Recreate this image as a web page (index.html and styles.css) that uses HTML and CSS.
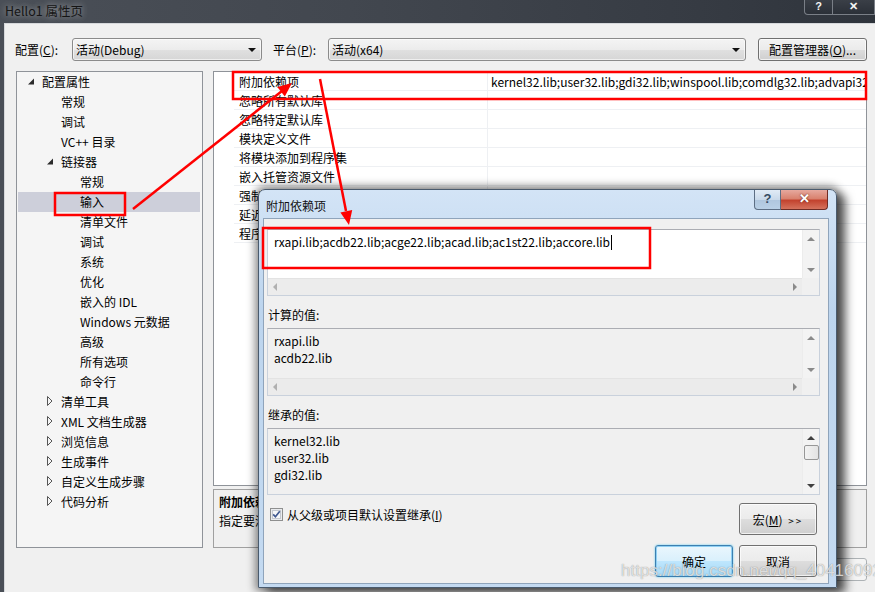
FILE: index.html
```html
<!DOCTYPE html>
<html lang="zh-CN">
<head>
    <meta charset="UTF-8">
    <title>Hello1 属性页</title>
    <link rel="stylesheet" href="styles.css">
</head>
<body>
    <div class="window">
        <div class="titlebar">
            <span class="title">Hello1 属性页</span>
            <div class="caption">
                <span class="cap-btn cap-help">?</span>
                <span class="cap-btn cap-close">✕</span>
            </div>
        </div>

        <div class="client">
            <!-- Configuration selectors -->
            <div class="config-row">
                <span class="lbl lbl-config">配置(<u>C</u>):</span>
                <div class="combo combo-config"><span>活动(Debug)</span><i class="drop"></i></div>
                <span class="lbl lbl-platform">平台(<u>P</u>):</span>
                <div class="combo combo-platform"><span>活动(x64)</span><i class="drop"></i></div>
                <button class="btn btn-manager">配置管理器(<u>O</u>)...</button>
            </div>

            <div class="main-row">
                <!-- Property tree -->
                <div class="tree">
                    <div class="node lv1"><svg class="tri" width="14" height="9" viewBox="0 0 14 9"><path d="M6 1.5V7.5H0z" fill="#2b2b2b"/></svg>配置属性</div>
                    <div class="node lv2">常规</div>
                    <div class="node lv2">调试</div>
                    <div class="node lv2">VC++ 目录</div>
                    <div class="node lv2 has-tri"><svg class="tri" width="14" height="9" viewBox="0 0 14 9"><path d="M6 1.5V7.5H0z" fill="#2b2b2b"/></svg>链接器</div>
                    <div class="node lv3">常规</div>
                    <div class="node lv3 selected">输入</div>
                    <div class="node lv3">清单文件</div>
                    <div class="node lv3">调试</div>
                    <div class="node lv3">系统</div>
                    <div class="node lv3">优化</div>
                    <div class="node lv3">嵌入的 IDL</div>
                    <div class="node lv3">Windows 元数据</div>
                    <div class="node lv3">高级</div>
                    <div class="node lv3">所有选项</div>
                    <div class="node lv3">命令行</div>
                    <div class="node lv2 has-tri"><svg class="tri" width="14" height="10" viewBox="0 0 14 10"><path d="M0.5 0.5L5 5L0.5 9.5z" fill="none" stroke="#555"/></svg>清单工具</div>
                    <div class="node lv2 has-tri"><svg class="tri" width="14" height="10" viewBox="0 0 14 10"><path d="M0.5 0.5L5 5L0.5 9.5z" fill="none" stroke="#555"/></svg>XML 文档生成器</div>
                    <div class="node lv2 has-tri"><svg class="tri" width="14" height="10" viewBox="0 0 14 10"><path d="M0.5 0.5L5 5L0.5 9.5z" fill="none" stroke="#555"/></svg>浏览信息</div>
                    <div class="node lv2 has-tri"><svg class="tri" width="14" height="10" viewBox="0 0 14 10"><path d="M0.5 0.5L5 5L0.5 9.5z" fill="none" stroke="#555"/></svg>生成事件</div>
                    <div class="node lv2 has-tri"><svg class="tri" width="14" height="10" viewBox="0 0 14 10"><path d="M0.5 0.5L5 5L0.5 9.5z" fill="none" stroke="#555"/></svg>自定义生成步骤</div>
                    <div class="node lv2 has-tri"><svg class="tri" width="14" height="10" viewBox="0 0 14 10"><path d="M0.5 0.5L5 5L0.5 9.5z" fill="none" stroke="#555"/></svg>代码分析</div>
                </div>

                <!-- Property grid + description -->
                <div class="right-col">
                    <div class="grid">
                        <div class="row"><div class="gutter"></div><div class="name">附加依赖项</div><div class="value">kernel32.lib;user32.lib;gdi32.lib;winspool.lib;comdlg32.lib;advapi32.lib;shell32.lib;ole32.lib</div></div>
                        <div class="row"><div class="gutter"></div><div class="name">忽略所有默认库</div><div class="value"></div></div>
                        <div class="row"><div class="gutter"></div><div class="name">忽略特定默认库</div><div class="value"></div></div>
                        <div class="row"><div class="gutter"></div><div class="name">模块定义文件</div><div class="value"></div></div>
                        <div class="row"><div class="gutter"></div><div class="name">将模块添加到程序集</div><div class="value"></div></div>
                        <div class="row"><div class="gutter"></div><div class="name">嵌入托管资源文件</div><div class="value"></div></div>
                        <div class="row"><div class="gutter"></div><div class="name">强制符号引用</div><div class="value"></div></div>
                        <div class="row"><div class="gutter"></div><div class="name">延迟加载的 DLL</div><div class="value"></div></div>
                        <div class="row"><div class="gutter"></div><div class="name">程序集链接资源</div><div class="value"></div></div>
                    </div>
                    <div class="desc">
                        <b>附加依赖项</b>
                        <p>指定要添加到链接命令行的附加项。[例如 kernel32.lib]</p>
                    </div>
                </div>
            </div>

            <div class="footer">
                <button class="btn">确定</button>
                <button class="btn">取消</button>
                <button class="btn btn-disabled"></button>
            </div>
        </div>
    </div>

    <!-- Additional dependencies dialog -->
    <div class="dialog">
        <div class="dlg-title">
            <span>附加依赖项</span>
            <div class="dlg-caption">
                <span class="dcap dcap-help">?</span>
                <span class="dcap dcap-close">✕</span>
            </div>
        </div>
        <div class="dlg-client">
            <div class="edit edit-main">
                <div class="edit-text">rxapi.lib;acdb22.lib;acge22.lib;acad.lib;ac1st22.lib;accore.lib<span class="caret"></span></div>
                <div class="vscroll"><i class="arr up"></i><i class="arr down"></i></div>
                <div class="hscroll"><i class="arr left"></i><i class="arr right"></i></div>
                <div class="corner"></div>
            </div>

            <div class="dlg-label">计算的值:</div>
            <div class="edit edit-main readonly">
                <div class="edit-text">rxapi.lib<br>acdb22.lib</div>
                <div class="vscroll"><i class="arr up"></i><i class="arr down"></i></div>
                <div class="hscroll"><i class="arr left"></i><i class="arr right"></i></div>
                <div class="corner"></div>
            </div>

            <div class="dlg-label">继承的值:</div>
            <div class="edit edit-list readonly">
                <div class="edit-text">kernel32.lib<br>user32.lib<br>gdi32.lib</div>
                <div class="vscroll"><i class="arr up dark"></i><span class="thumb"></span><i class="arr down dark"></i></div>
            </div>

            <div class="dlg-row">
                <label class="check">
                    <svg class="box" width="13" height="13" viewBox="0 0 13 13">
                        <rect x="0.5" y="0.5" width="12" height="12" fill="#e9ebee" stroke="#8e8f8f"/>
                        <rect x="2.5" y="2.5" width="8" height="8" fill="#f6f7f9" stroke="#c4c8cf"/>
                        <path d="M3.2 6.4L5.4 8.8L9.8 3.2" fill="none" stroke="#3f5890" stroke-width="1.7"/>
                    </svg>
                    <span>从父级或项目默认设置继承(<u>I</u>)</span>
                </label>
                <button class="btn btn-macro">宏(<u>M</u>) <span class="gt">&gt;&gt;</span></button>
            </div>

            <div class="dlg-actions">
                <button class="btn btn-default">确定</button>
                <button class="btn">取消</button>
            </div>
        </div>
    </div>

    <div class="watermark">https://blog.csdn.net/qq_40416092</div>

    <!-- Red annotation marks -->
    <svg class="annot" width="875" height="592" viewBox="0 0 875 592">
        <rect x="233" y="72" width="633" height="27" fill="none" stroke="#f00" stroke-width="2.5"/>
        <rect x="55" y="193" width="70" height="22" fill="none" stroke="#f00" stroke-width="2.5"/>
        <rect x="263" y="228" width="387" height="40" fill="none" stroke="#f00" stroke-width="2.5"/>
        <line x1="133" y1="209" x2="282" y2="91" stroke="#f00" stroke-width="2.5"/>
        <polygon points="292,83 284.8,96.4 277.3,87.0" fill="#f00"/>
        <line x1="320" y1="79" x2="346" y2="211" stroke="#f00" stroke-width="2.5"/>
        <polygon points="349,225 352.2,210.1 340.4,212.5" fill="#f00"/>
    </svg>
</body>
</html>
```

FILE: styles.css
```css
* {
    box-sizing: border-box;
}

html, body {
    margin: 0;
    padding: 0;
}

body {
    width: 875px;
    height: 592px;
    overflow: hidden;
    position: relative;
    background: #f0f0f0;
    font-family: "Noto Sans CJK SC", "Noto Sans", sans-serif;
    font-size: 12px;
    color: #000;
}

u {
    text-decoration: underline;
}

/* Main window */
.window {
    width: 875px;
    height: 592px;
    padding-left: 4px;
    display: flex;
    flex-direction: column;
    background: linear-gradient(90deg, #4a4f57 0%, #42474f 40%, #363b43 80%, #2f343c 100%);
}

.titlebar {
    height: 23px;
    display: flex;
    align-items: flex-start;
}

.title {
    padding: 2px 0 0 1px;
    line-height: 18px;
    font-size: 12.5px;
    color: #151515;
    text-shadow: 0 0 6px rgba(255,255,255,0.45), 0 0 10px rgba(255,255,255,0.25);
}

.caption {
    margin-left: auto;
    display: flex;
}

.cap-btn {
    height: 15px;
    line-height: 13px;
    text-align: center;
    color: #f4f4f4;
    font-family: "Liberation Sans", sans-serif;
    font-weight: bold;
    font-size: 11px;
    border: 1px solid #7a7f87;
    border-top: none;
    background: linear-gradient(#3a3f47, #2b3038);
}

.cap-help {
    width: 29px;
    border-radius: 0 0 0 4px;
}

.cap-close {
    width: 42px;
    border-left: none;
}

.client {
    flex: 1;
    background: #f0f0f0;
    border-top: 1px solid #d6d8db;
    border-left: 1px solid #d6d8db;
    padding: 14px 0 0 10px;
}

.config-row {
    height: 23px;
    display: flex;
    align-items: center;
}

.lbl {
    white-space: nowrap;
}

.lbl-config {
    width: 57px;
}

.lbl-platform {
    width: 55px;
    margin-left: 11px;
}

.combo {
    height: 23px;
    display: flex;
    align-items: center;
    padding-left: 3px;
    border: 1px solid #8b8b8b;
    border-radius: 3px;
    background: linear-gradient(#f4f4f4 0%, #ececec 50%, #e0e0e0 51%, #d6d6d6 100%);
    box-shadow: inset 0 0 0 1px rgba(255,255,255,0.6);
}

.combo-config {
    width: 190px;
}

.combo-platform {
    width: 418px;
}

.drop {
    margin-left: auto;
    margin-right: 5px;
    width: 0;
    height: 0;
    border-left: 4px solid transparent;
    border-right: 4px solid transparent;
    border-top: 4px solid #111;
}

.btn {
    font: inherit;
    color: #000;
    height: 23px;
    padding: 0;
    border: 1px solid #707070;
    border-radius: 3px;
    background: linear-gradient(#f2f2f2 0%, #ebebeb 50%, #dddddd 51%, #cfcfcf 100%);
    box-shadow: inset 0 0 0 1px rgba(255,255,255,0.7);
}

.btn-disabled {
    border-color: #adb2b5;
    background: #f4f4f4;
    box-shadow: none;
}

.btn-manager {
    width: 109px;
    margin-left: 12px;
}

.main-row {
    display: flex;
    gap: 10px;
    margin: 10px 0 0 1px;
    height: 477px;
}

/* Tree */
.tree {
    width: 187px;
    background: #f5f5f5;
    border: 1px solid #8f9399;
}

.node {
    height: 20px;
    padding-bottom: 2px;
    display: flex;
    align-items: center;
    white-space: nowrap;
}

.tri {
    flex: none;
}

.lv1 {
    padding-left: 11px;
}

.lv2 {
    padding-left: 44px;
}

.lv2.has-tri {
    padding-left: 30px;
}

.lv3 {
    padding-left: 63px;
}

.node.selected {
    margin: 0 2px 0 1px;
    padding-left: 62px;
    background: #cdcfda;
}

/* Property grid */
.right-col {
    width: 654px;
    display: flex;
    flex-direction: column;
}

.grid {
    height: 415px;
    background: #fff;
    border: 1px solid #8f9399;
}

.row {
    height: 19px;
    display: flex;
}

.gutter {
    width: 20px;
}

.name {
    width: 253px;
    padding-left: 5px;
    line-height: 19px;
    border-bottom: 1px solid #eef0f3;
    white-space: nowrap;
}

.value {
    flex: 1;
    padding-left: 3px;
    line-height: 19px;
    border-left: 1px solid #eef0f3;
    border-bottom: 1px solid #eef0f3;
    white-space: nowrap;
    overflow: hidden;
}

.desc {
    margin-top: 3px;
    height: 59px;
    border: 1px solid #a0a0a0;
    padding: 2px 5px;
    line-height: 19px;
}

.desc p {
    margin: 0;
}

.footer {
    margin-top: 10px;
    padding-right: 8px;
    display: flex;
    justify-content: flex-end;
    gap: 6px;
}

.footer .btn {
    width: 75px;
}

/* Dialog */
.dialog {
    position: absolute;
    left: 258px;
    top: 189px;
    width: 579px;
    height: 399px;
    padding: 0 7px 3px 4px;
    border: 1px solid #4a5b6e;
    border-radius: 7px 7px 0 0;
    background: linear-gradient(180deg, #d3e4f6 0%, #bdd5ee 30%, #c4daf1 100%);
    box-shadow: 0 0 9px 3px rgba(0,0,0,0.45), 9px 5px 10px rgba(0,0,0,0.55);
    display: flex;
    flex-direction: column;
}

.dlg-title {
    height: 28px;
    display: flex;
    align-items: flex-start;
}

.dlg-title > span {
    padding: 7px 0 0 3px;
    line-height: 18px;
    color: #111;
}

.dlg-caption {
    margin-left: auto;
    margin-right: 1px;
    display: flex;
}

.dcap {
    height: 20px;
    line-height: 18px;
    text-align: center;
    font-family: "Liberation Sans", sans-serif;
    font-weight: bold;
    border: 1px solid #5c6e84;
    border-top: none;
}

.dcap-help {
    width: 27px;
    color: #364b63;
    font-size: 13px;
    border-radius: 0 0 0 4px;
    background: linear-gradient(#e1ebf6 0%, #c9d9ea 50%, #afc6de 51%, #b9d0e6 100%);
}

.dcap-close {
    width: 47px;
    color: #fff;
    font-size: 13px;
    border-color: #6f2c25;
    border-left: none;
    border-radius: 0 0 4px 0;
    background: linear-gradient(#e6a99e 0%, #d9826f 45%, #c3432f 55%, #d5725d 100%);
    text-shadow: 0 0 2px #5a1a12;
}

.dlg-client {
    flex: 1;
    background: #f0f0f0;
    border: 1px solid #8fa4bb;
    padding: 10px 8px 0 3px;
    display: flex;
    flex-direction: column;
}

.edit {
    display: grid;
    grid-template-columns: 1fr 17px;
    border: 1px solid #c9d1dc;
    border-top-color: #abadb3;
    background: #fff;
}

.edit.readonly {
    background: #f0f0f0;
}

.edit-main {
    height: 67px;
    grid-template-rows: 1fr 17px;
}

.edit-main.readonly {
    height: 68px;
}

.edit-list {
    height: 67px;
}

.edit-text {
    padding: 3px 0 0 6px;
    line-height: 17px;
    white-space: nowrap;
    overflow: hidden;
}

.caret {
    display: inline-block;
    width: 1px;
    height: 15px;
    margin-left: 1px;
    background: #000;
    vertical-align: -3px;
}

.vscroll {
    background: #f3f3f3;
    border-left: 1px solid #ececec;
    display: flex;
    flex-direction: column;
    align-items: center;
    justify-content: space-between;
    padding: 7px 0 6px;
}

.hscroll {
    background: #ececec;
    border-top: 1px solid #e3e3e3;
    display: flex;
    align-items: center;
    justify-content: space-between;
    padding: 0 5px;
}

.edit.readonly .hscroll {
    background: #ebebeb;
}

.corner {
    background: #f0f0f0;
}

.arr {
    width: 0;
    height: 0;
}

.arr.up {
    border-left: 4px solid transparent;
    border-right: 4px solid transparent;
    border-bottom: 4px solid #8a8a8a;
}

.arr.down {
    border-left: 4px solid transparent;
    border-right: 4px solid transparent;
    border-top: 4px solid #8a8a8a;
}

.arr.up.dark {
    border-bottom-color: #404040;
}

.arr.down.dark {
    border-top-color: #404040;
}

.arr.left {
    border-top: 4px solid transparent;
    border-bottom: 4px solid transparent;
    border-right: 4px solid #b0b0b0;
}

.arr.right {
    border-top: 4px solid transparent;
    border-bottom: 4px solid transparent;
    border-left: 4px solid #8a8a8a;
}

.edit-list .vscroll {
    justify-content: flex-start;
    padding: 7px 0 6px;
}

.edit-list .vscroll .arr.down {
    margin-top: auto;
}

.thumb {
    width: 15px;
    height: 15px;
    margin-top: 5px;
    border: 1px solid #979797;
    border-radius: 2px;
    background: linear-gradient(90deg, #f3f3f3, #e3e3e3);
}

.dlg-label {
    margin-top: 10px;
    padding-left: 1px;
    line-height: 18px;
    height: 18px;
}

.dlg-label + .edit {
    margin-top: 4px;
}

.dlg-row {
    margin-top: 8px;
    height: 32px;
    display: flex;
    align-items: flex-start;
}

.check {
    display: flex;
    align-items: center;
    gap: 4px;
    margin: 4px 0 0 3px;
    line-height: 15px;
}

.btn-macro {
    margin-left: auto;
    margin-right: 3px;
    width: 78px;
    height: 32px;
}

.gt {
    font-size: 10px;
    letter-spacing: 2px;
    margin-left: 3px;
}

.dlg-actions {
    margin-top: 10px;
    display: flex;
    justify-content: flex-end;
    gap: 6px;
    padding-right: 3px;
}

.dlg-actions .btn {
    width: 78px;
    height: 32px;
}

.btn-default {
    border-color: #3c7fb1;
    background: linear-gradient(#eaf6fd 0%, #d9f0fc 50%, #bee6fd 51%, #a7d9f5 100%);
    box-shadow: inset 0 0 0 1px #8fd0f3, 0 0 2px #48c8f4;
}

/* Overlays */
.watermark {
    position: absolute;
    left: 621px;
    top: 561px;
    font-family: "Liberation Sans", sans-serif;
    font-size: 17px;
    color: rgba(255,255,255,0.72);
    text-shadow: 0 0 1px rgba(80,80,80,0.7);
    white-space: nowrap;
}

.annot {
    position: absolute;
    left: 0;
    top: 0;
    pointer-events: none;
}
```
